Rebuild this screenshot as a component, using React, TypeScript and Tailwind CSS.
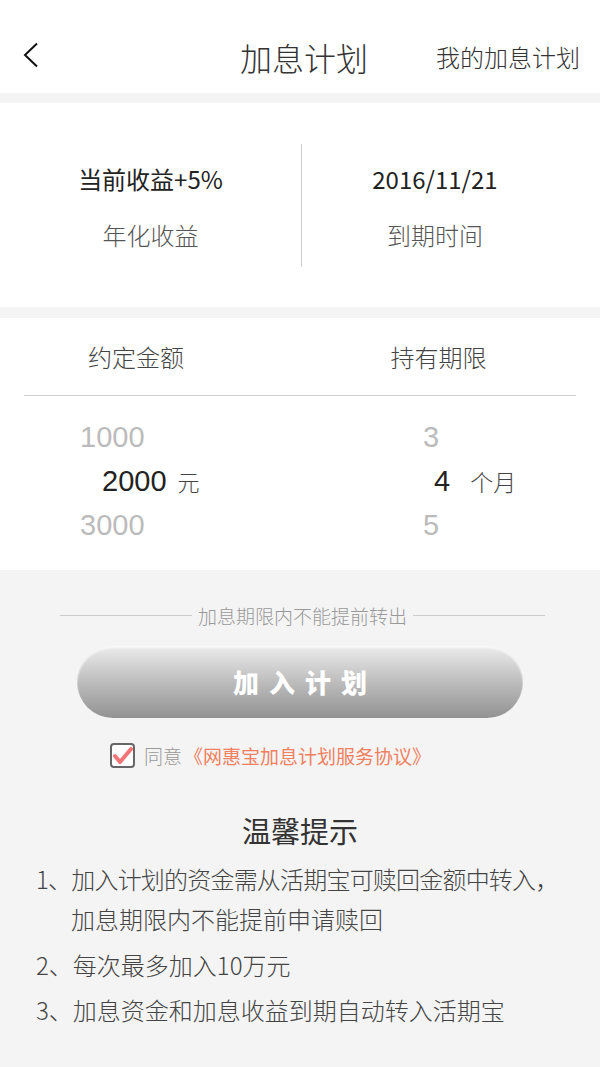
export default function App() {
  const font = { fontFamily: '"Noto Sans CJK SC", "Noto Sans", sans-serif' };
  const num = { fontFamily: '"Liberation Sans", Arial, sans-serif' };
  return (
    <div className="w-[600px] min-h-[1067px] bg-[#f4f4f4]" style={font}>
      {/* header */}
      <div className="relative h-[93px] bg-white flex items-center justify-center">
        <svg className="absolute left-[22px] top-[42px]" width="18" height="26" viewBox="0 0 18 26">
          <path d="M15 1.5 L3 13 L15 24.5" fill="none" stroke="#111" strokeWidth="2" />
        </svg>
        <span className="text-[32px] text-[#333] leading-none mt-[20px] ml-[8px] font-light">加息计划</span>
        <span className="absolute right-[20px] top-[45px] text-[24px] text-[#333] leading-none font-light">
          我的加息计划
        </span>
      </div>

      {/* info */}
      <div className="mt-[10px] bg-white h-[204px] flex items-center">
        <div className="w-[301px] flex flex-col items-center gap-[32px] pt-[4px]">
          <span className="text-[24px] text-[#222] leading-none">当前收益+5%</span>
          <span className="text-[24px] text-[#555] leading-none font-light">年化收益</span>
        </div>
        <div className="w-px h-[123px] bg-[#ccc]" />
        <div className="flex-1 flex flex-col items-center gap-[32px] pt-[4px] pr-[32px]">
          <span className="text-[24px] text-[#222] leading-none">2016/11/21</span>
          <span className="text-[24px] text-[#555] leading-none font-light">到期时间</span>
        </div>
      </div>

      {/* picker */}
      <div className="mt-[11px] bg-white h-[252px] pt-[27px]">
        <div className="mx-[24px] flex border-b border-[#cfcfcf] pb-[26px]">
          <div className="w-[224px] text-center text-[24px] text-[#444] leading-none font-light">约定金额</div>
          <div className="flex-1 text-center text-[24px] text-[#444] leading-none font-light pl-[53px]">持有期限</div>
        </div>
        <div className="flex pt-[26px]">
          <div className="w-[300px] pl-[80px] flex flex-col gap-[14px] text-[29px] leading-[30px]" style={num}>
            <span className="text-[#bbb]">1000</span>
            <span className="pl-[22px] text-[#222] flex items-baseline">
              2000<span className="ml-[11px] text-[22px] text-[#444] font-light" style={font}>元</span>
            </span>
            <span className="text-[#bbb]">3000</span>
          </div>
          <div className="flex-1 pl-[123px] flex flex-col gap-[14px] text-[29px] leading-[30px]" style={num}>
            <span className="text-[#bbb]">3</span>
            <span className="pl-[11px] text-[#222] flex items-baseline">
              4<span className="ml-[20px] text-[23px] text-[#444] font-light" style={font}>个月</span>
            </span>
            <span className="text-[#bbb]">5</span>
          </div>
        </div>
      </div>

      {/* action */}
      <div className="pt-[36px] pl-[60px] pr-[55px]">
        <div className="flex items-center gap-[6px]">
          <div className="flex-1 h-px bg-[#ccc]" />
          <span className="text-[19px] text-[#999] leading-none font-light">加息期限内不能提前转出</span>
          <div className="flex-1 h-px bg-[#ccc]" />
        </div>
      </div>
      <div className="px-[77px] pt-[21px]">
        <div className="h-[72px] rounded-full bg-gradient-to-b from-[#ececec] via-[#bdbdbd] to-[#929292] flex items-center justify-center shadow-[inset_0_2px_2px_rgba(255,255,255,0.7)]">
          <span className="text-white text-[26px] font-black tracking-[10px] leading-none pl-[10px]">加入计划</span>
        </div>
      </div>
      <div className="pl-[110px] pt-[25px] flex items-center">
        <div className="w-[25px] h-[25px] rounded-[4px] border-2 border-[#666] bg-white flex items-center justify-center">
          <svg width="20" height="18" viewBox="0 0 20 18">
            <path d="M2 9 L7 15 L18 2" fill="none" stroke="#f37578" strokeWidth="4" strokeLinecap="round" strokeLinejoin="round" />
          </svg>
        </div>
        <span className="ml-[9px] text-[19px] text-[#999] leading-none font-light">同意</span>
        <span className="ml-[2px] text-[19px] text-[#f0805f] leading-none">《网惠宝加息计划服务协议》</span>
      </div>

      {/* tips */}
      <div className="pt-[48px] text-center text-[29px] text-[#333] leading-none">温馨提示</div>
      <div className="pt-[20px] pl-[36px] text-[24px] text-[#444] font-light leading-[28px]">
        <div className="tracking-[-0.8px]">1、加入计划的资金需从活期宝可赎回金额中转入，</div>
        <div className="pl-[35px] mt-[12px]">加息期限内不能提前申请赎回</div>
        <div className="mt-[18px]">2、每次最多加入10万元</div>
        <div className="mt-[17px]">3、加息资金和加息收益到期自动转入活期宝</div>
      </div>
    </div>
  );
}
